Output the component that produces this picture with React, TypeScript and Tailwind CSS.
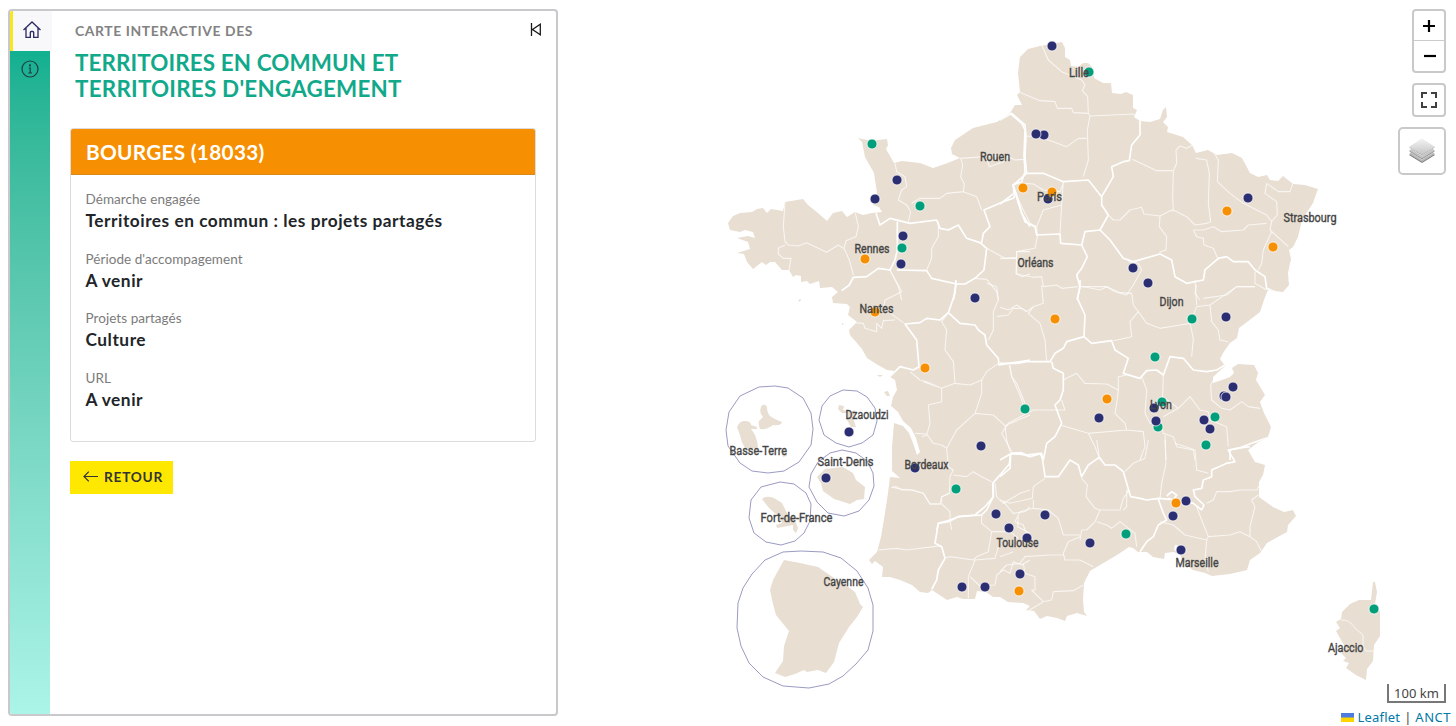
import React from "react";

type Sheet = { x: number; y: number; thin: string[]; thick: string[] };

const MAINLAND =
  "M1062 42L1065 48 1065 57 1070 60 1071 66 1078 67 1083 63 1088 63 1092 67 1094 78 1103 83 1111 83 1112 93 1121 94 1126 92 1133 95 1133 108 1137 110 1134 117 1140 121 1150 122 1160 119 1163 110 1166 107 1167 117 1163 122 1168 127 1167 132 1183 137 1192 145 1196 153 1208 150 1217 155 1232 153 1242 158 1250 173 1258 177 1267 175 1270 180 1278 181 1283 176 1293 184 1305 185 1318 189 1313 203 1302 220 1298 237 1293 247 1289 250 1291 259 1288 273 1289 285 1283 292 1275 291 1268 290 1265 297 1260 312 1247 322 1239 328 1237 338 1230 343 1223 353 1220 359 1225 366 1213 377 1213 383 1222 380 1230 377 1234 373 1232 368 1238 364 1254 365 1258 373 1256 380 1265 395 1260 402 1264 413 1271 427 1268 437 1257 443 1248 450 1255 462 1265 465 1263 475 1259 482 1259 497 1273 507 1284 512 1293 510 1296 516 1288 525 1287 532 1267 543 1260 553 1250 560 1247 570 1230 574 1212 576 1205 573 1193 570 1184 563 1180 555 1174 552 1165 553 1164 559 1153 557 1147 552 1138 552 1133 548 1129 547 1117 555 1100 565 1090 571 1084 583 1083 600 1084 612 1087 616 1077 613 1067 616 1065 621 1057 618 1047 616 1040 619 1034 611 1026 610 1030 606 1023 603 1008 602 1000 597 993 597 986 592 977 591 975 599 963 599 957 597 947 600 932 590 928 593 920 592 912 585 900 580 890 577 882 577 883 567 875 561 872 564 869 560 877 552 881 537 885 513 888 493 890 477 900 478 892 471 892 447 894 423 903 426 909 433 913 443 917 455 920 452 916 438 911 428 903 421 898 412 891 406 893 397 897 390 895 380 890 377 895 371 887 370 878 365 867 358 862 349 850 335 849 330 857 322 848 315 850 307 847 304 833 303 832 297 838 292 832 287 820 288 819 281 810 284 807 281 801 282 801 276 796 275 793 277 789 270 782 270 775 262 770 262 766 265 762 262 753 269 747 262 744 254 737 253 750 249 748 242 737 238 748 236 755 238 753 232 745 230 740 232 730 230 728 223 733 216 740 213 752 212 757 209 763 208 767 213 771 209 783 211 785 202 803 199 808 205 818 213 827 221 833 213 842 211 847 217 855 212 863 215 872 213 882 212 879 207 873 205 877 193 874 173 865 157 862 142 858 138 872 141 878 140 887 139 888 145 886 149 894 163 902 161 920 163 933 168 945 164 960 158 952 154 951 148 955 140 973 128 997 122 1010 113 1015 105 1022 105 1017 95 1020 92 1018 73 1020 57 1028 49 1040 46Z";

const SHEETS: Sheet[] = [
  {
    x: 720,
    y: 30,
    thin: [
      "M195 515L190 590 195 635 205 645 235 648 260 638 320 667 355 645 370 655M195 645L175 655 175 672 190 685 213 685 207 720",
      "M405 545L415 590 408 620 378 632 372 655 388 690 400 735",
      "M525 400L530 425 555 440 560 470 545 480 535 510 560 525 572 545 565 575",
      "M575 520L600 505 660 505 680 490 730 485 733 462 722 440 728 405 722 385 765 382 805 378 860 378 885 390 912 388",
      "M800 385L808 410 850 395 865 382M730 485L770 500 785 540",
      "M655 575L655 620 635 655 635 685 620 720M510 720L535 770 545 810",
      "M800 655L855 685 890 682 890 665 930 665M890 685L890 730 905 740 930 732M765 745L800 748 830 785 835 810",
    ],
    thick: [
      "M468 550L480 585 510 565 570 580 650 570 660 595 685 600 715 585 740 625 780 638 800 655 792 720 765 745 735 762 708 762 700 810",
      "M532 575L532 660 525 690 510 720 475 715 440 740 400 742 388 765 365 782",
      "M530 720L620 722 635 745 710 762",
      "M785 638L790 610 810 590 792 540 850 515 880 505 888 490 878 465 905 455 915 425 912 375 915 300 905 280 870 250",
      "M878 465L895 510 905 550 930 590",
    ],
  },
  {
    x: 1000,
    y: 30,
    thin: [
      "M125 45L145 90 185 125 245 150 255 165 247 182 263 200 265 250",
      "M55 185L120 212 165 215 172 235 215 235 220 248 265 250 270 258 400 252 408 265",
      "M75 318L115 320 160 335 200 350 235 325 260 325",
      "M270 258L262 300 265 390 250 440",
      "M397 388L440 408 470 422 520 422 530 400 528 360 540 348 560 355 578 345M588 385L620 390 628 430 625 520 632 575",
      "M520 422L518 500 520 540 560 560 585 585 620 580 632 575",
      "M640 365L655 390 652 455 690 490 730 520 800 555 815 575",
      "M800 460L795 490 830 515 832 555 815 575 810 600 865 650",
      "M800 460L835 485 870 485 878 462M580 600L610 600 640 590 665 605 730 600 745 585 800 580",
      "M580 600L590 620 610 625 612 645 640 655 655 690",
      "M320 550L340 570 360 570 390 540 425 532 432 552 480 558 515 540 520 545",
      "M480 558L478 590 500 620 498 660 480 665 480 675",
      "M70 460L100 462 130 480 180 485 192 455M55 510L90 580 110 590 130 540 185 525 190 455M185 525L180 610",
      "M110 590L112 620 105 655 50 665 48 732 100 742 125 740 130 770 170 765 185 775 235 770",
      "M0 685L50 685M240 768L300 780 320 770 345 785 380 795 400 765 425 720 415 700 385 695",
      "M815 605L790 660 785 700 775 720M765 725L765 760 800 780M590 765L585 790 600 810M610 805L680 795 710 770 765 770",
    ],
    thick: [
      "M0 270L35 250 75 285 78 318 75 380 80 430 40 465 42 490 0 522",
      "M80 430L130 430 190 455 265 450 305 500 340 440 335 410 370 395 388 392 395 345 420 315 420 270",
      "M40 465L55 520 75 575 105 590 110 615 180 612 182 640 245 645 255 605 300 600 325 555 305 525 305 500",
      "M300 600L330 630 370 685 400 695 480 672 515 690 525 740 560 760 610 750 615 720 655 685 680 680 700 695 745 695 765 720 795 740 800 775 825 785",
      "M245 645L262 680 245 715 230 735 240 770 232 810",
    ],
  },
  {
    x: 720,
    y: 280,
    thin: [
      "M510 -30L535 15 545 35 495 60 490 85 550 128",
      "M400 128L430 130 435 145 470 155 470 130 485 145 490 122 525 120",
      "M685 98L665 125 680 150 675 210 700 245 705 310M610 305L665 325 705 310 750 315 785 300 800 275 835 250",
      "M570 275L600 300 620 305 665 325 665 365 625 375 630 430 620 465 605 470M585 460L620 462 640 490 665 495 680 505 710 450 765 400 785 340 785 300",
      "M765 400L820 405 855 437 930 405M680 505L685 560 700 570 690 590 688 640 665 650 660 672 630 672 610 640 575 630 545 630 530 620 515 622",
      "M700 585L740 590 760 575 785 590 815 605M855 437L860 480 870 515M800 10L830 20 835 60 820 95 820 150 805 180",
      "M830 110L865 105 880 85 905 85 920 95M868 255L875 290 900 345 910 375M690 720L695 750M825 610L830 650 850 670 900 640 930 630",
    ],
    thick: [
      "M708 0L705 40 685 98 660 120 620 115 600 128 555 132 590 180 597 260 580 270 540 260 510 290",
      "M685 98L720 130 765 135 775 150 795 165 800 195 835 235 837 255 930 240",
      "M930 530L905 518 872 520 868 552 840 585 818 610 820 650 795 680 765 705 715 710 690 720 655 730 650 750",
    ],
  },
  {
    x: 1000,
    y: 280,
    thin: [
      "M0 82L25 90 50 75 80 95 100 80 130 70 125 15M100 80L85 100 120 130 135 180 140 245",
      "M240 20L320 20 360 38 395 40 400 75 415 95 390 125 395 170 340 182",
      "M415 95L440 130 480 145 540 135 570 130 590 80 630 75 710 20 765 20",
      "M570 130L580 175 575 230M630 75L635 125 655 150 660 180 685 185M590 75L585 0",
      "M190 300L230 280 255 310 320 312 355 330 355 290 380 285",
      "M30 255L35 290 50 310 75 370M185 360L195 390 100 390 25 430 5 460 35 515",
      "M355 330L350 370 345 400 375 430 380 450 265 460 285 500 300 540",
      "M425 290L440 330 435 400 450 430 485 440 490 460 520 470M490 285L488 350 535 385 490 410",
      "M535 385L570 350 600 390 625 395 630 420 680 440 685 500M632 315L635 360 665 385 690 390 725 365 745 380 780 385",
      "M640 300L632 315M180 435L265 460M380 450L430 455 435 500 420 540M495 460L498 540M520 470L530 500 580 510 585 540",
    ],
    thick: [
      "M240 0L240 20 232 55 255 105 252 170 275 190 335 182 345 210 385 235 370 280 420 295 440 272 470 270 490 285 510 230 550 235 580 270 620 275 650 270 675 255",
      "M0 250L50 250 80 245 150 245 165 220 190 205 200 185 252 170",
      "M155 245L160 265 190 280 190 330 180 360 165 375 185 430 165 470 140 490 130 540",
      "M810 470L755 490 715 505 690 510 690 540M0 540L35 520 80 525 120 520 130 540",
    ],
  },
  {
    x: 720,
    y: 480,
    thin: [
      "M475 210L530 205 560 210 640 200 665 198M515 22L545 28 575 30 610 40 630 72 665 72 665 50 690 40",
      "M665 72L690 95 690 125M785 105L785 130 815 155 805 215 770 230 760 240 690 230 672 235M765 240L745 290 745 355",
      "M765 240L825 235 835 200M750 290L780 318 825 315 830 285 850 270 870 280 880 245 905 255 930 240",
      "M815 155L870 155 895 175M850 65L880 100 915 95 930 80M895 110L893 140 930 160",
    ],
    thick: [
      "M820 10L820 50 800 90 785 105 715 110 685 125 655 130 645 190 665 200 675 235 655 270 650 300 635 328",
    ],
  },
  {
    x: 1000,
    y: 440,
    thin: [
      "M135 115L100 140 97 175 30 190 0 180M100 180L100 205 60 215 45 245 70 255 80 285M100 205L145 210 175 235 190 285 240 285M240 290L205 305 190 340 195 360 240 360 280 380",
      "M245 115L262 135 258 170 285 205 300 210 285 245 260 270 245 270 240 300",
      "M300 210L360 210 370 175 385 155 380 150M380 150L380 200 370 210M290 245L320 255 335 265 360 245 405 280 410 320",
      "M375 95L400 70 435 55 445 0M290 0L298 50M495 0L498 70 485 130 480 175",
      "M525 10L585 30 590 90 625 100M480 245L520 255 555 285 620 300 625 290M590 200L605 240 625 290 690 285 720 275 750 290 750 260 765 200 755 180 775 165",
      "M620 190L640 180 650 155 690 155 720 150 770 150 785 125M620 300L615 360 625 395M750 290L770 305 785 335",
      "M0 395L20 375 60 370 75 350 150 345 190 345M70 370L75 400 105 410 105 450 95 450 130 485 80 515M130 485L155 480 160 455 220 452 250 435",
      "M0 350L40 335",
    ],
    thick: [
      "M0 110L30 85 32 42 65 42 90 50 125 40 135 110 175 110 210 60 235 75 245 110 265 75 298 52 315 75 345 75 370 95 392 170 420 175 440 180 475 175 510 178",
      "M475 178L490 220 500 240 475 255 460 290 440 305 420 335",
      "M500 168L515 155 530 165 520 180 505 175M605 210L612 195 585 170 580 150 605 145 610 120 635 110 635 90 680 70 705 65 690 40 685 30 710 25 750 20",
      "M560 185L580 190 605 210",
    ],
  },
];

const ISLANDS = [
  // Guadeloupe
  "M737 427Q740 420 745 421Q751 421 751 425L757 427 757 429 751 429Q757 436 758 447Q753 450 745 448Q741 442 740 435ZM762 405Q766 404 767 407Q767 413 770 416Q774 419 782 422Q781 426 773 425Q767 430 760 429Q758 424 759 421L763 417Q758 412 762 405ZM782 454L787 453 787 456 783 457Z",
  // Mayotte
  "M839 405L844 406 843 410 849 412 855 410 853 418 856 427 851 427 847 420 848 413 842 413 838 409Z",
  // La Réunion
  "M817 477L825 469 843 467 853 473 856 480 865 487 864 499 857 500 850 504 834 499 823 491 821 483Z",
  // Martinique
  "M762 499Q766 495 774 498L782 503 789 517 794 518 798 528 796 533 793 530 793 525 777 528 776 525 782 523 778 516 769 508Z",
  // Guyane
  "M784 560L800 563 818 567 831 576 847 586 855 592 860 604 863 607 857 617 849 627 839 643 834 662 826 673 818 670 807 672 804 670 795 674 785 677 775 673 783 661 784 646 785 643 789 631 776 615 773 604 770 590 773 580Z",
  // Corse
  "M1373 582L1375 582 1377 592 1375 604 1380 612 1380 636 1374 645 1373 661 1367 669 1366 680 1356 675 1346 668 1349 663 1343 661 1346 658 1340 652 1345 647 1336 631 1340 628 1336 622 1341 619 1342 612 1350 604 1359 600 1371 600Z",
  // Atlantic islands
  "M884 392L888 391 890 396 887 396ZM877 375L883 375 880 377ZM798 300L801 299 800 302ZM842 323L844 324 842 325ZM836 341L840 342Z",
];

const FRAMES = [
  "M759 387L775 386 788 388 803 398 811 413 813 429 811 445 799 462 784 471 768 473 752 471 740 463 728 446 726 430 729 412 740 396Z",
  "M843 390L857 391 867 397 875 408 877 421 873 435 862 443 849 447 836 443 824 435 819 420 822 406 830 396Z",
  "M842 450L856 453 867 461 873 473 874 486 869 500 859 511 844 516 828 513 817 502 809 487 811 474 818 462 830 453Z",
  "M780 482L794 484 806 493 811 504 810 521 804 533 795 541 781 545 766 542 754 533 749 518 751 500 761 487Z",
  "M801 551L823 552 841 558 857 571 868 588 873 605 873 631 868 650 856 664 843 676 829 684 809 688 783 686 763 677 749 663 741 646 737 628 738 603 743 588 752 574 765 560 783 552Z",
];

const NAVY = "#2b2f72";
const GREEN = "#009e7b";
const ORANGE = "#f69002";

const MARKERS: [number, number, string][] = [
  [1052, 46, NAVY], [1089, 72, GREEN], [1044, 135, NAVY], [1036, 134, NAVY],
  [872, 144, GREEN], [897, 180, NAVY], [875, 199, NAVY], [920, 206, GREEN],
  [903, 236, NAVY], [902, 248, GREEN], [901, 264, NAVY], [865, 259, ORANGE],
  [1023, 188, ORANGE], [1048, 199, NAVY], [1052, 192, ORANGE], [1248, 198, NAVY],
  [1227, 211, ORANGE], [1273, 247, ORANGE], [1133, 268, NAVY], [1148, 283, NAVY],
  [975, 298, NAVY], [875, 312, ORANGE], [1055, 319, ORANGE], [1192, 319, GREEN],
  [1226, 317, NAVY], [1155, 357, GREEN], [925, 368, ORANGE], [1233, 387, NAVY],
  [1224, 396, NAVY], [1226, 397, NAVY], [1025, 409, GREEN], [1107, 399, ORANGE],
  [1099, 418, NAVY], [1162, 402, GREEN], [1154, 408, NAVY], [1158, 427, GREEN],
  [1156, 421, NAVY], [1204, 420, NAVY], [1215, 417, GREEN], [1210, 429, NAVY],
  [1206, 445, GREEN], [849, 432, NAVY], [826, 478, NAVY], [981, 446, NAVY],
  [915, 468, NAVY], [956, 489, GREEN], [996, 514, NAVY], [1009, 528, NAVY],
  [1045, 515, NAVY], [1027, 538, NAVY], [1090, 543, NAVY], [1126, 534, GREEN],
  [1186, 501, NAVY], [1176, 503, ORANGE], [1173, 516, NAVY], [1181, 550, NAVY],
  [962, 587, NAVY], [985, 587, NAVY], [1020, 574, NAVY], [1019, 591, ORANGE],
  [1374, 609, GREEN],
];

const CITIES: [string, number, number, number][] = [
  ["Lille", 1069, 77, 20], ["Rouen", 980, 161, 30], ["Paris", 1037, 201, 25],
  ["Strasbourg", 1283.5, 221.500, 53], ["Rennes", 854.5, 253, 35], ["Orléans", 1017.5, 267, 36],
  ["Nantes", 859.5, 313, 34], ["Dijon", 1159.5, 306, 24], ["Lyon", 1150, 409, 22],
  ["Bordeaux", 904.5, 469, 44], ["Toulouse", 996.5, 547, 42], ["Marseille", 1175.5, 567, 43],
  ["Ajaccio", 1328, 652, 35.5], ["Basse-Terre", 729.5, 455, 57.5], ["Dzaoudzi", 845.5, 419, 43],
  ["Saint-Denis", 817.5, 466, 56], ["Fort-de-France", 760.5, 522, 72], ["Cayenne", 823.5, 586, 40],
];

function FranceMap() {
  return (
    <svg className="block h-full w-full" viewBox="0 0 1456 726" role="img">
      <defs>
        <clipPath id="land">
          <path d={MAINLAND} />
        </clipPath>
      </defs>
      <g fill="#e8ded2">
        <path d={MAINLAND} />
        {ISLANDS.map((d) => (
          <path key={d} d={d} />
        ))}
      </g>
      <path d="M1341 620Q1349 619 1356 629L1363 635 1363 646 1366 651 1374 651" fill="none" stroke="#faf7f2" />
      <path d="M1175 545L1180 546 1179 552 1174 550Z" fill="#fff" />
      <g clipPath="url(#land)" fill="none" stroke="#fff" strokeLinejoin="round">
        {SHEETS.map((s, i) => (
          <g key={i} transform={`translate(${s.x} ${s.y}) scale(.33333)`}>
            <path d={s.thin.join("")} strokeWidth="3.3" opacity=".7" />
            <path d={s.thick.join("")} strokeWidth="5" />
          </g>
        ))}
      </g>
      <g fill="none" stroke="#9a9bc1" strokeWidth="1">
        {FRAMES.map((d) => (
          <path key={d} d={d} />
        ))}
      </g>
      {MARKERS.map(([x, y, color], i) => (
        <circle key={i} cx={x} cy={y} r="5" fill={color} stroke="#fff" strokeOpacity=".75" strokeWidth="1" />
      ))}
      <g fontFamily="'Liberation Sans Narrow', Roboto, sans-serif" fontSize="12" fill="#444" stroke="#444" strokeWidth=".35">
        {CITIES.map(([name, x, y, w]) => (
          <text key={name} x={x} y={y} textLength={w} lengthAdjust="spacingAndGlyphs">
            {name}
          </text>
        ))}
      </g>
    </svg>
  );
}

function Field({ label, value }: { label: string; value: string }) {
  return (
    <div className="h-[59.5px]">
      <div className="text-[13.5px] leading-[20px] tracking-[0.05px] text-[#7b7b7b]">{label}</div>
      <div className="text-[17.3px] leading-[23px] font-bold tracking-[0.52px] text-[#212529]">{value}</div>
    </div>
  );
}

function Panel() {
  return (
    <aside className="flex h-[707px] w-[550px] overflow-hidden rounded border-2 border-[#c9c9cb] bg-white">
      <nav className="w-[42px] shrink-0">
        <div className="flex h-10 items-center justify-center border-l-[3px] border-[#f8e71c] bg-[#f8f8fa] pr-[2px]">
          <svg width="20" height="20" viewBox="0 0 20 20" fill="none" stroke="#2b2f66" strokeWidth="1.35" className="mb-[3px]">
            <path d="M1.500 10L10 2l8.500 8M4 8v9.400h4.300v-4.900q0-1 1-1h1.400q1 0 1 1v4.900H16V8" />
          </svg>
        </div>
        <div className="h-[663px] w-10 bg-gradient-to-b from-[#10b090] to-[#abf4e8] pt-[9px] pl-[11px]">
          <svg width="18" height="18" viewBox="0 0 18 18" fill="none" stroke="#1e3d40" strokeWidth="1.2">
            <circle cx="9" cy="9" r="8" />
            <path d="M7.700 8H9.200v5M7.300 13h3.700" />
            <circle cx="9" cy="5.400" r=".5" fill="#1e3d40" />
          </svg>
        </div>
      </nav>
      <div className="flex-1 pr-5 pl-[18px]">
        <header className="flex items-start justify-between pl-[5px]">
          <div>
            <div className="mt-[10px] text-[13.9px] leading-5 font-bold tracking-[0.6px] text-[#828282]">CARTE INTERACTIVE DES</div>
            <h1 className="mt-[9px] text-[22.4px] leading-[26px] font-bold whitespace-nowrap text-[#11a98a]">
              <span className="block tracking-[0.12px]">TERRITOIRES EN COMMUN ET</span>
              <span className="block tracking-[0.23px]">TERRITOIRES D'ENGAGEMENT</span>
            </h1>
          </div>
          <svg className="mt-3 -mr-[6px]" width="12" height="13" viewBox="0 0 12 13" fill="none" stroke="#1a1a1a" strokeWidth="1.3">
            <path d="M1.500 0v13M10.300 1.300v10.400L2.500 6.500Z" />
          </svg>
        </header>
        <section className="mt-[26px] h-[314px] w-[466px] overflow-hidden rounded-[3px] border border-[#dcdcde]">
          <h2 className="h-[46px] border-b border-[#d98a1c] bg-[#f69002] pl-[15px] text-[20.8px] leading-[46px] font-bold tracking-[0.28px] text-white">
            BOURGES (18033)
          </h2>
          <div className="pt-[14px] pl-[14.5px]">
            <Field label="Démarche engagée" value="Territoires en commun : les projets partagés" />
            <Field label="Période d'accompagement" value="A venir" />
            <Field label="Projets partagés" value="Culture" />
            <Field label="URL" value="A venir" />
          </div>
        </section>
        <button className="mt-[19px] flex h-[33px] w-[103px] items-center bg-[#ffe800] pl-[13px] text-[13.7px] font-bold tracking-[0.75px] text-[#333]">
          <svg width="15" height="11" viewBox="0 0 15 11" fill="none" stroke="#333" strokeWidth="1.2" className="mr-[6px] mb-[3px]">
            <path d="M15 5.500H1M5.800.700L1 5.500l4.800 4.800" />
          </svg>
          RETOUR
        </button>
      </div>
    </aside>
  );
}

function MapControls() {
  return (
    <div className="flex flex-col items-end gap-[10px]">
      <div className="h-16 w-[34px] rounded border-2 border-[#c9c9c9] bg-white">
        <div className="flex h-[30px] items-center justify-center border-b border-[#ccc]">
          <svg width="12" height="12" stroke="#000" strokeWidth="2.200">
            <path d="M6 0v12M0 6h12" />
          </svg>
        </div>
        <div className="flex h-[30px] items-center justify-center pl-[2px]">
          <svg width="12" height="12" stroke="#000" strokeWidth="2.200">
            <path d="M0 6h12" />
          </svg>
        </div>
      </div>
      <div className="flex h-[34px] w-[34px] items-center justify-center rounded border-2 border-[#c9c9c9] bg-white">
        <svg width="16" height="16" fill="none" stroke="#404040" strokeWidth="2">
          <path d="M1 6V1h5M10 1h5v5M15 10v5h-5M6 15H1v-5" />
        </svg>
      </div>
      <div className="flex h-12 w-12 items-center justify-center rounded-[5px] border-2 border-[#c9c9c9] bg-white">
        <svg width="26" height="26" viewBox="0 0 26 26">
          <defs>
            <linearGradient id="sheet" x2="0" y2="1">
              <stop stopColor="#f4f4f4" />
              <stop offset="1" stopColor="#c4c4c4" />
            </linearGradient>
          </defs>
          <path d="M0 17l13-8 13 8-13 8z" fill="#7d7d7d" />
          <path d="M0 16l13-8 13 8-13 8z" fill="#b5b5b5" />
          <path d="M0 13.500l13-8 13 8-13 8z" fill="#808080" stroke="#fff" strokeWidth=".5" />
          <path d="M0 12.500l13-8 13 8-13 8z" fill="#c4c4c4" />
          <path d="M0 9.500l13-8.500 13 8.500-13 8z" fill="#858585" stroke="#fff" strokeWidth=".5" />
          <path d="M0 9l13-8.500L26 9l-13 8z" fill="url(#sheet)" />
        </svg>
      </div>
    </div>
  );
}

export default function App() {
  return (
    <main className="grid h-[726px] w-[1456px] overflow-hidden bg-white font-['Lato',sans-serif]">
      <div className="col-start-1 row-start-1 h-[726px]">
        <FranceMap />
      </div>
      <div className="z-10 col-start-1 row-start-1 flex h-[726px] justify-between pt-[9px] pl-2">
        <Panel />
        <div className="flex h-[717px] flex-col items-end justify-between">
          <div className="pr-[10px]">
            <MapControls />
          </div>
          <div className="flex flex-col items-end font-['Noto_Sans',sans-serif] text-[13px] whitespace-nowrap">
            <div className="mr-[10px] mb-[6px] h-[19px] w-[59px] border-2 border-t-0 border-[#777] text-center leading-[18px] text-[#444]">100 km</div>
            <div className="flex h-[17px] items-center pr-[5px] leading-[17px] text-[#444]">
              <svg width="13" height="9" className="mr-[3px]">
                <path fill="#4c7be1" d="M0 0h13v5H0z" />
                <path fill="#ffd500" d="M0 4.500h13V9H0z" />
              </svg>
              <span className="tracking-[0.2px] text-[#0078a8]">Leaflet</span>
              <span className="px-1">|</span>
              <span className="tracking-[0.5px] text-[#0078a8]">ANCT</span>
            </div>
          </div>
        </div>
      </div>
    </main>
  );
}
